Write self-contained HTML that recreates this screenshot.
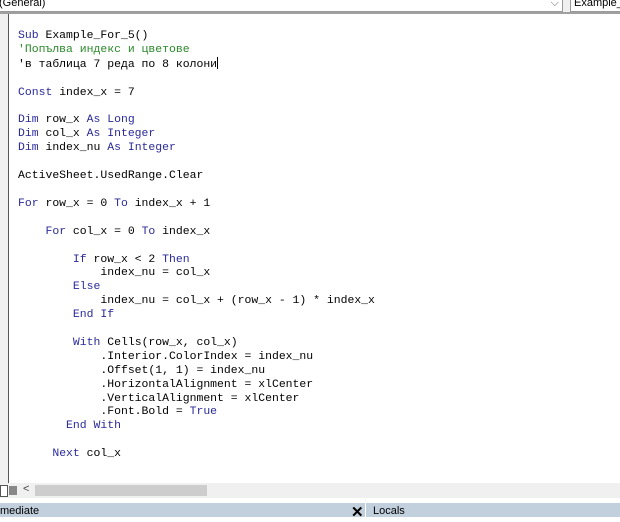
<html><head><style>
body{margin:0;width:620px;height:517px;position:relative;background:#fff;overflow:hidden;font-family:"Liberation Sans",sans-serif}
.top{position:absolute;left:0;top:0;width:620px;height:12px;background:#f0f0f0;border-bottom:2px solid #a0a0a0}
.dd1{position:absolute;left:-2px;top:-4px;width:563px;height:14px;background:#fff;border:1px solid #999;font-size:11px;line-height:12px}
.dd2{position:absolute;left:570px;top:-4px;width:60px;height:14px;background:#fff;border:1px solid #999;font-size:11px;line-height:12px;padding-left:3px}
.gut{position:absolute;left:0;top:14px;width:8px;height:469px;background:#f0f0f0;border-right:1px solid #555}
pre{position:absolute;left:18px;top:29px;margin:0;font-family:"Liberation Mono",monospace;font-size:11.45px;line-height:13.9px;color:#000}
.k{color:#2a2a9a}.c{color:#2a8a2a}
.sb{position:absolute;left:0;top:483px;width:620px;height:15px;background:#f0f0f0}
.th{position:absolute;left:35px;top:485px;width:172px;height:11px;background:#cdcdcd}
.bot{position:absolute;left:0;top:503px;width:620px;height:14px;background:#c2d0de;font-size:11px;line-height:17px}
</style></head><body>
<div class="top"><div class="dd1">(General)<span style="position:absolute;right:3px;top:0;color:#666">⌵</span></div><div class="dd2">Example_</div></div>
<div class="gut"></div>
<pre><span class="k">Sub</span> Example_For_5()
<span class="c">'Попълва индекс и цветове</span>
'в таблица 7 реда по 8 колони<span style="display:inline-block;width:1px;height:12px;background:#000;vertical-align:-2px"></span>

<span class="k">Const</span> index_x = 7

<span class="k">Dim</span> row_x <span class="k">As Long</span>
<span class="k">Dim</span> col_x <span class="k">As Integer</span>
<span class="k">Dim</span> index_nu <span class="k">As Integer</span>

ActiveSheet.UsedRange.Clear

<span class="k">For</span> row_x = 0 <span class="k">To</span> index_x + 1

    <span class="k">For</span> col_x = 0 <span class="k">To</span> index_x

        <span class="k">If</span> row_x &lt; 2 <span class="k">Then</span>
            index_nu = col_x
        <span class="k">Else</span>
            index_nu = col_x + (row_x - 1) * index_x
        <span class="k">End If</span>

        <span class="k">With</span> Cells(row_x, col_x)
            .Interior.ColorIndex = index_nu
            .Offset(1, 1) = index_nu
            .HorizontalAlignment = xlCenter
            .VerticalAlignment = xlCenter
            .Font.Bold = <span class="k">True</span>
       <span class="k">End With</span>

     <span class="k">Next</span> col_x</pre>
<div class="sb"><span style="position:absolute;left:0;top:2px;width:6px;height:10px;border:1px solid #555;background:#fff"></span><span style="position:absolute;left:9px;top:3px;width:8px;height:9px;background:#888"></span><span style="position:absolute;left:23px;top:0;font-size:11px;color:#444">&lt;</span></div>
<div class="th"></div>
<div class="bot"><span style="position:absolute;left:0">mediate</span><span style="position:absolute;left:351px;top:0;font-weight:bold;font-size:15px;line-height:19px">✕</span><span style="position:absolute;left:365px;top:0;width:1px;height:15px;background:#fff"></span><span style="position:absolute;left:373px">Locals</span></div>
</body></html>
